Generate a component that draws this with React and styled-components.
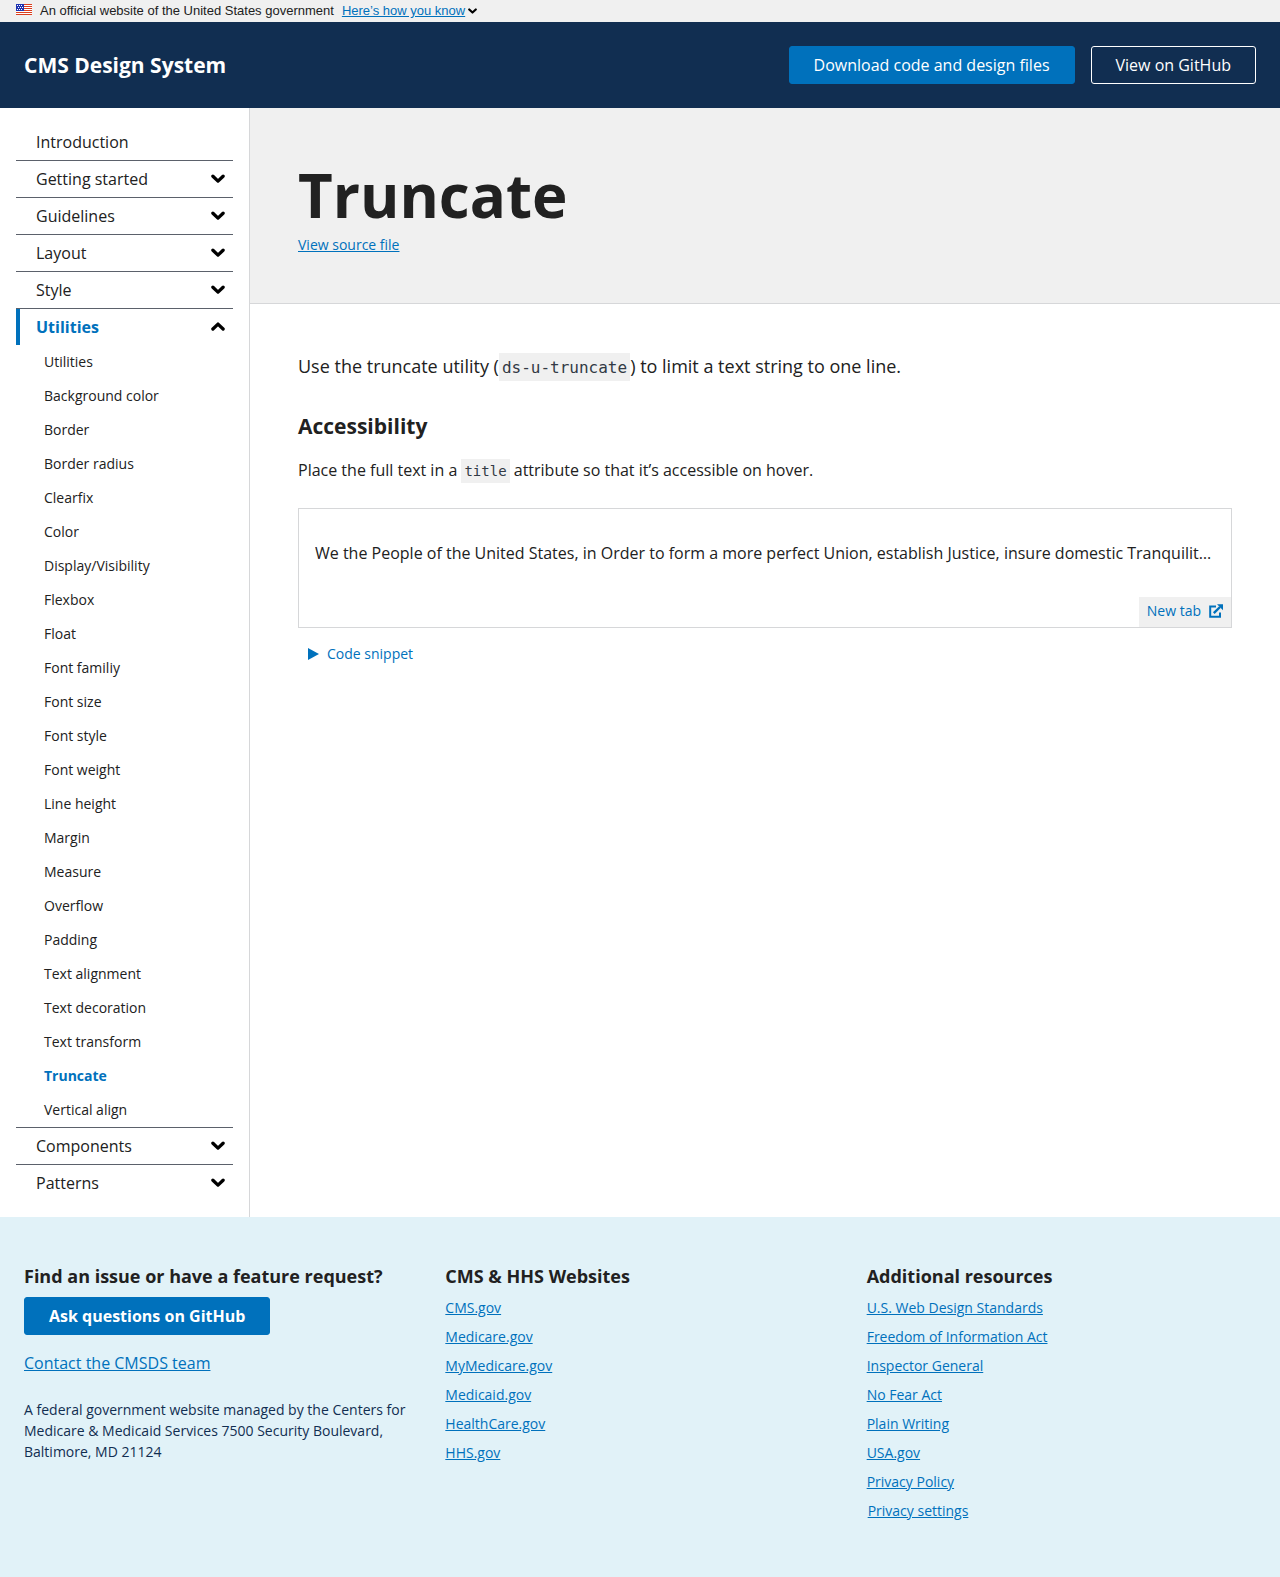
import React, { useState } from "react";
import styled, { createGlobalStyle, css } from "styled-components";

const color = {
  ink: "#212121",
  navy: "#112e51",
  primary: "#0071bc",
  grayBg: "#f0f0f0",
  border: "#d6d7d9",
  rule: "#5b616b",
  code: "#323a45",
  footerBg: "#e1f2f8",
  white: "#ffffff",
};

const GlobalStyle = createGlobalStyle`
  *, *::before, *::after { box-sizing: border-box; }
  body {
    margin: 0;
    background: ${color.white};
    color: ${color.ink};
    font-family: "Open Sans", "Noto Sans", sans-serif;
    font-size: 16px;
    line-height: 24px;
  }
  h1, h2, h3, p, ul { margin: 0; padding: 0; }
  ul { list-style: none; }
  button { font-family: inherit; cursor: pointer; }
`;

const linkText = css`
  color: ${color.primary};
  text-decoration: underline;
`;

const Page = styled.div`
  display: flex;
  flex-direction: column;
  min-height: 100vh;
`;

const Banner = styled.section`
  display: flex;
  align-items: center;
  height: 22px;
  padding: 0 16px;
  background: ${color.grayBg};
  font-family: "Liberation Sans", Arial, sans-serif;
  font-size: 13px;
  line-height: 16px;
`;

const FlagIcon = styled.svg`
  width: 16px;
  height: 11px;
  margin: 0 8px 3px 0;
  flex: none;
`;

const BannerToggle = styled.button`
  display: flex;
  align-items: center;
  gap: 3px;
  margin-left: 8px;
  padding: 0;
  border: 0;
  background: none;
  font-size: 13px;
  line-height: 16px;
  color: #000;

  span { ${linkText} }
`;

const Header = styled.header`
  display: flex;
  align-items: center;
  justify-content: space-between;
  padding: 24px;
  background: ${color.navy};
`;

const SiteName = styled.a`
  color: ${color.white};
  font-size: 21px;
  line-height: 28px;
  font-weight: 700;
  text-decoration: none;
`;

const HeaderActions = styled.div`
  display: flex;
  gap: 16px;
`;

const ButtonLink = styled.a`
  display: inline-block;
  padding: 6px 24px;
  border: 1px solid ${(p) => (p.$outline ? color.white : color.primary)};
  border-radius: 3px;
  background: ${(p) => (p.$outline ? "transparent" : color.primary)};
  color: ${color.white};
  font-size: 16px;
  line-height: 24px;
  font-weight: ${(p) => (p.$bold ? 700 : 400)};
  text-decoration: none;
`;

const Body = styled.div`
  display: grid;
  grid-template-columns: 250px minmax(0, 1fr);
`;

const Sidebar = styled.nav`
  padding: 16px;
  border-right: 1px solid ${color.border};
`;

const NavSection = styled.li`
  & + & { border-top: 1px solid ${color.rule}; }
`;

const navRow = css`
  display: flex;
  align-items: center;
  justify-content: space-between;
  width: 100%;
  height: 36px;
  padding: 0 8px 0 ${(p) => (p.$open ? "16px" : "20px")};
  border: 0;
  border-left: ${(p) => (p.$open ? `4px solid ${color.primary}` : "0")};
  background: none;
  color: ${(p) => (p.$open ? color.primary : color.ink)};
  font-size: 16px;
  line-height: 24px;
  font-weight: ${(p) => (p.$open ? 700 : 400)};
  text-align: left;
  text-decoration: none;
`;

const NavLink = styled.a`${navRow}`;
const NavToggle = styled.button`${navRow}`;

const SubLink = styled.a`
  display: block;
  padding: 6px 28px 7px;
  color: ${(p) => (p.$current ? color.primary : color.ink)};
  font-size: 14px;
  line-height: 21px;
  font-weight: ${(p) => (p.$current ? 700 : 400)};
  text-decoration: none;
`;

const PageHeader = styled.header`
  padding: 48px;
  border-bottom: 1px solid ${color.border};
  background: ${color.grayBg};
`;

const PageTitle = styled.h1`
  font-size: 60px;
  line-height: 78px;
  font-weight: 700;
`;

const SourceLink = styled.a`
  ${linkText}
  display: block;
  width: fit-content;
  font-size: 14px;
  line-height: 21px;
`;

const Content = styled.div`
  padding: 48px;
`;

const Lead = styled.p`
  font-size: 18px;
  line-height: 28px;
`;

const Code = styled.code`
  padding: ${(p) => (p.$large ? "5px 3px 4px" : "4px 3px")};
  background: ${color.grayBg};
  color: ${color.code};
  font-family: "DejaVu Sans Mono", "Liberation Mono", monospace;
  font-size: ${(p) => (p.$large ? 16 : 14)}px;
  line-height: 16px;
`;

const SectionTitle = styled.h2`
  margin-top: 32px;
  font-size: 21px;
  line-height: 28px;
  font-weight: 700;
`;

const Paragraph = styled.p`
  margin-top: 18px;
`;

const Example = styled.div`
  display: flex;
  flex-direction: column;
  margin-top: 26px;
  border: 1px solid ${color.border};
`;

const Truncated = styled.p`
  overflow: hidden;
  margin: 32px 16px;
  text-overflow: ellipsis;
  white-space: nowrap;
`;

const NewTabLink = styled.a`
  display: flex;
  align-items: center;
  align-self: flex-end;
  gap: 8px;
  padding: 4px 8px 6px;
  background: ${color.grayBg};
  color: ${color.primary};
  font-size: 14px;
  line-height: 20px;
  text-decoration: none;
`;

const Snippet = styled.button`
  display: flex;
  align-items: center;
  gap: 8px;
  margin-top: 8px;
  padding: 8px 10px;
  border: 0;
  background: none;
  color: ${color.primary};
  font-size: 14px;
  line-height: 20px;
`;

const Footer = styled.footer`
  display: grid;
  flex: 1;
  grid-template-columns: repeat(3, minmax(0, 1fr));
  padding: 48px 8px;
  background: ${color.footerBg};
`;

const FooterColumn = styled.section`
  padding: 0 16px;
`;

const FooterTitle = styled.h3`
  margin-bottom: 10px;
  font-size: 18px;
  line-height: 22px;
  font-weight: 700;
`;

const ContactLink = styled.a`
  ${linkText}
  display: block;
  width: fit-content;
  margin-top: 16px;
`;

const Address = styled.p`
  margin-top: 24px;
  color: ${color.navy};
  font-size: 14px;
  line-height: 21px;
`;

const LinkList = styled.ul`
  display: flex;
  flex-direction: column;
  gap: 8px;
  font-size: 14px;
  line-height: 21px;

  a { ${linkText} }
`;

const SettingsButton = styled.button`
  ${linkText}
  display: block;
  padding: 0 1px;
  border: 0;
  background: none;
  font-size: 14px;
  line-height: 21px;
`;

const Flag = () => (
  <FlagIcon viewBox="0 0 16 11" aria-hidden="true">
    <rect width="16" height="11" fill="#fff" />
    {[0, 2, 4, 6, 8, 10].map((y) => (
      <rect key={y} y={y} width="16" height="1" fill="#db3e1f" />
    ))}
    <rect width="8" height="7" fill="#1e33b1" />
    {[1, 3, 5].map((y) =>
      [1, 3, 5].map((x) => (
        <rect key={`${x}-${y}`} x={x + (y === 3 ? 1 : 0)} y={y} width="1" height="1" fill="#fff" />
      ))
    )}
  </FlagIcon>
);

const Chevron = ({ up, width = 14 }) => (
  <svg width={width} height={(width * 10) / 14} viewBox="0 0 14 10" fill="none" aria-hidden="true">
    <path
      d={up ? "M1.9 7 7 2.1 12.1 7" : "M1.9 2.2 7 7.1 12.1 2.2"}
      stroke="#000"
      strokeWidth="3.3"
      strokeLinecap="round"
      strokeLinejoin="round"
    />
  </svg>
);

const ExternalIcon = () => (
  <svg width="14" height="14" viewBox="0 0 14 14" aria-hidden="true">
    <path d="M7 2.5H1.2V12.8H11V8.5" fill="none" stroke={color.primary} strokeWidth="2" />
    <path d="M4.8 9.2 11 3" fill="none" stroke={color.primary} strokeWidth="2.4" />
    <path d="M8 0.3H14V6.3Z" fill={color.primary} />
  </svg>
);

const Triangle = () => (
  <svg width="11" height="12" viewBox="0 0 11 12" aria-hidden="true">
    <path d="M0 0 11 6 0 12Z" fill={color.primary} />
  </svg>
);

const utilities = [
  "Utilities", "Background color", "Border", "Border radius", "Clearfix", "Color",
  "Display/Visibility", "Flexbox", "Float", "Font familiy", "Font size", "Font style",
  "Font weight", "Line height", "Margin", "Measure", "Overflow", "Padding",
  "Text alignment", "Text decoration", "Text transform", "Truncate", "Vertical align",
];

const sections = [
  { title: "Getting started" },
  { title: "Guidelines" },
  { title: "Layout" },
  { title: "Style" },
  { title: "Utilities", children: utilities },
  { title: "Components" },
  { title: "Patterns" },
];

const agencyLinks = ["CMS.gov", "Medicare.gov", "MyMedicare.gov", "Medicaid.gov", "HealthCare.gov", "HHS.gov"];

const resourceLinks = [
  "U.S. Web Design Standards", "Freedom of Information Act", "Inspector General",
  "No Fear Act", "Plain Writing", "USA.gov", "Privacy Policy",
];

const preamble =
  "We the People of the United States, in Order to form a more perfect Union, establish Justice, insure domestic Tranquility, provide for the common defence, promote the general Welfare, and secure the Blessings of Liberty to ourselves and our Posterity, do ordain and establish this Constitution for the United States of America.";

export default function App() {
  const [open, setOpen] = useState("Utilities");

  return (
    <Page>
      <GlobalStyle />
      <Banner aria-label="Official government website">
        <Flag />
        An official website of the United States government
        <BannerToggle type="button" aria-expanded="false">
          <span>Here’s how you know</span>
          <Chevron width={9} />
        </BannerToggle>
      </Banner>

      <Header>
        <SiteName href="#home">CMS Design System</SiteName>
        <HeaderActions>
          <ButtonLink href="#download">Download code and design files</ButtonLink>
          <ButtonLink href="#github" $outline>View on GitHub</ButtonLink>
        </HeaderActions>
      </Header>

      <Body>
        <Sidebar aria-label="Documentation">
          <ul>
            <NavSection>
              <NavLink href="#introduction">Introduction</NavLink>
            </NavSection>
            {sections.map(({ title, children }) => {
              const isOpen = open === title;
              return (
                <NavSection key={title}>
                  <NavToggle
                    type="button"
                    $open={isOpen}
                    aria-expanded={isOpen}
                    onClick={() => setOpen(isOpen ? null : title)}
                  >
                    {title}
                    <Chevron up={isOpen} />
                  </NavToggle>
                  {isOpen && children && (
                    <ul>
                      {children.map((name) => (
                        <li key={name}>
                          <SubLink href="#page" $current={name === "Truncate"}>{name}</SubLink>
                        </li>
                      ))}
                    </ul>
                  )}
                </NavSection>
              );
            })}
          </ul>
        </Sidebar>

        <main>
          <PageHeader>
            <PageTitle>Truncate</PageTitle>
            <SourceLink href="#source">View source file</SourceLink>
          </PageHeader>
          <Content>
            <Lead>
              Use the truncate utility (<Code $large>ds-u-truncate</Code>) to limit a text string to one line.
            </Lead>
            <SectionTitle>Accessibility</SectionTitle>
            <Paragraph>
              Place the full text in a <Code>title</Code> attribute so that it’s accessible on hover.
            </Paragraph>
            <Example>
              <Truncated title={preamble}>{preamble}</Truncated>
              <NewTabLink href="#example">
                New tab
                <ExternalIcon />
              </NewTabLink>
            </Example>
            <Snippet type="button" aria-expanded="false">
              <Triangle />
              Code snippet
            </Snippet>
          </Content>
        </main>
      </Body>

      <Footer>
        <FooterColumn>
          <FooterTitle>Find an issue or have a feature request?</FooterTitle>
          <ButtonLink href="#questions" $bold>Ask questions on GitHub</ButtonLink>
          <ContactLink href="#contact">Contact the CMSDS team</ContactLink>
          <Address>
            A federal government website managed by the Centers for Medicare & Medicaid Services 7500
            Security Boulevard, Baltimore, MD 21124
          </Address>
        </FooterColumn>
        <FooterColumn>
          <FooterTitle>CMS & HHS Websites</FooterTitle>
          <LinkList>
            {agencyLinks.map((name) => (
              <li key={name}><a href="#agency">{name}</a></li>
            ))}
          </LinkList>
        </FooterColumn>
        <FooterColumn>
          <FooterTitle>Additional resources</FooterTitle>
          <LinkList>
            {resourceLinks.map((name) => (
              <li key={name}><a href="#resource">{name}</a></li>
            ))}
            <li><SettingsButton type="button">Privacy settings</SettingsButton></li>
          </LinkList>
        </FooterColumn>
      </Footer>
    </Page>
  );
}
